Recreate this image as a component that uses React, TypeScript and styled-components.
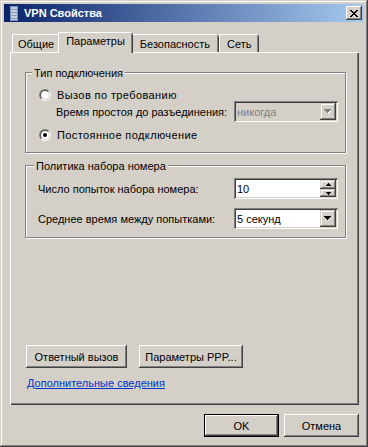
import React from "react";
import styled, { createGlobalStyle } from "styled-components";

const GlobalStyle = createGlobalStyle`
  html, body { margin: 0; padding: 0; background: #d4d0c8; }
  body {
    font-family: "Liberation Sans", Arial, sans-serif;
    font-size: 11px;
    color: #000;
  }
  * { box-sizing: border-box; }
`;

const Window = styled.div`
  width: 368px;
  height: 447px;
  padding: 4px;
  background: #d4d0c8;
  display: flex;
  flex-direction: column;
  box-shadow: inset -1px -1px #404040, inset 1px 1px #d4d0c8,
    inset -2px -2px #808080, inset 2px 2px #fff;
`;

const TitleBar = styled.div`
  height: 18px;
  display: flex;
  align-items: center;
  gap: 6px;
  padding: 0 2px 0 6px;
  background: linear-gradient(to right, #0a246a, #a6caf0);
  color: #fff;
  font-weight: bold;
  font-size: 11px;
`;

const TitleText = styled.span`
  flex: 1;
`;

const CloseButton = styled.span`
  width: 16px;
  height: 14px;
  display: flex;
  align-items: center;
  justify-content: center;
  background: #d4d0c8;
  box-shadow: inset -1px -1px #404040, inset 1px 1px #fff,
    inset -2px -2px #808080, inset 2px 2px #d4d0c8;
`;

const Body = styled.div`
  flex: 1;
  display: flex;
  flex-direction: column;
  padding: 10px 5px 6px 6px;
`;

const TabStrip = styled.div`
  display: flex;
  align-items: flex-end;
  height: 20px;
  padding-left: 2px;
  position: relative;
  z-index: 1;
`;

const Tab = styled.div<{ $active?: boolean; $pad?: number }>`
  height: ${(p) => (p.$active ? "21px" : "18px")};
  margin: ${(p) => (p.$active ? "0 -2px -1px" : "0")};
  padding: ${(p) => (p.$active ? "3px" : "4px")} ${(p) => p.$pad ?? 7}px 0;
  background: #d4d0c8;
  border-radius: 2px 2px 0 0;
  box-shadow: inset 1px 0 #fff, inset 0 1px #fff, inset -1px 0 #404040,
    inset -2px 0 #808080;
  position: relative;
  z-index: ${(p) => (p.$active ? 2 : 0)};
  white-space: nowrap;
`;

const Panel = styled.div`
  flex: 1;
  display: flex;
  flex-direction: column;
  padding: 19px 0 15px 0;
  border-top: 1px solid #fff;
  border-left: 1px solid #fff;
  box-shadow: inset -1px -1px #404040, inset -2px -2px #808080;
`;

const Group = styled.div<{ $top?: number }>`
  margin: ${(p) => p.$top ?? 0}px 13px 0 14px;
  border: 1px solid #808080;
  box-shadow: inset 1px 1px #fff, 1px 1px #fff;
  display: flex;
  flex-direction: column;
`;

const Legend = styled.span<{ $left?: number }>`
  align-self: flex-start;
  margin: -6px 0 0 ${(p) => p.$left ?? 6}px;
  padding: 0 2px;
  line-height: 13px;
  background: #d4d0c8;
`;

const GroupBody = styled.div<{ $pad: string }>`
  display: flex;
  flex-direction: column;
  padding: ${(p) => p.$pad};
`;

const RadioRow = styled.label<{ $top?: number }>`
  display: flex;
  align-items: center;
  gap: 6px;
  height: 13px;
  margin-top: ${(p) => p.$top ?? 0}px;
  letter-spacing: 0.4px;
`;

const RadioOuter = styled.span`
  width: 12px;
  height: 12px;
  border-radius: 50%;
  border: 1px solid;
  border-color: #808080 #fff #fff #808080;
  display: flex;
  align-items: center;
  justify-content: center;
`;

const RadioInner = styled.span`
  width: 10px;
  height: 10px;
  border-radius: 50%;
  border: 1px solid;
  border-color: #404040 #d4d0c8 #d4d0c8 #404040;
  background: #fff;
  display: flex;
  align-items: center;
  justify-content: center;
`;

const Dot = styled.span`
  width: 4px;
  height: 4px;
  border-radius: 50%;
  background: #000;
`;

const FieldRow = styled.div<{ $top?: number; $indent?: number }>`
  display: flex;
  align-items: center;
  height: 21px;
  margin-top: ${(p) => p.$top ?? 0}px;
  padding-left: ${(p) => p.$indent ?? 0}px;
`;

const FieldLabel = styled.span`
  flex: 1;
`;

const Field = styled.div<{ $disabled?: boolean }>`
  width: 104px;
  height: 21px;
  padding: 2px;
  display: flex;
  align-items: stretch;
  background: ${(p) => (p.$disabled ? "#d4d0c8" : "#fff")};
  color: ${(p) => (p.$disabled ? "#808080" : "#000")};
  box-shadow: inset 1px 1px #808080, inset -1px -1px #fff,
    inset 2px 2px #404040, inset -2px -2px #d4d0c8;
`;

const FieldText = styled.span`
  flex: 1;
  display: flex;
  align-items: center;
  padding-left: 1px;
`;

const arrowButton = `
  background: #d4d0c8;
  display: flex;
  align-items: center;
  justify-content: center;
  box-shadow: inset -1px -1px #404040, inset 1px 1px #d4d0c8,
    inset -2px -2px #808080, inset 2px 2px #fff;
`;

const DropButton = styled.span`
  width: 16px;
  ${arrowButton}
`;

const SpinStack = styled.span`
  width: 16px;
  display: flex;
  flex-direction: column;
`;

const SpinButton = styled.span<{ $h: number }>`
  height: ${(p) => p.$h}px;
  ${arrowButton}
`;

const ButtonRow = styled.div`
  display: flex;
  gap: 12px;
  margin: auto 0 0 15px;
`;

const Button = styled.button<{ $w: number; $default?: boolean }>`
  width: ${(p) => p.$w}px;
  height: 23px;
  padding: 0;
  font: inherit;
  color: #000;
  background: #d4d0c8;
  border: ${(p) => (p.$default ? "1px solid #000" : "none")};
  box-shadow: inset -1px -1px #404040, inset 1px 1px #fff,
    inset -2px -2px #808080, inset 2px 2px #d4d0c8;
`;

const Link = styled.a`
  align-self: flex-start;
  margin: 9px 0 0 16px;
  line-height: 13px;
  color: #0033cc;
  text-decoration: underline;
`;

const Footer = styled.div`
  display: flex;
  justify-content: flex-end;
  gap: 5px;
  margin-top: 9px;
`;

const DownArrow = ({ color = "#000", shadow }: { color?: string; shadow?: boolean }) => (
  <svg width="8" height="5" viewBox="0 0 8 5" shapeRendering="crispEdges">
    {shadow && <path d="M2 2h5v1H2zM3 3h3v1H3zM4 4h1v1H4z" fill="#fff" />}
    <path d="M0 0h7v1H0zM1 1h5v1H1zM2 2h3v1H2zM3 3h1v1H3z" fill={color} />
  </svg>
);

const SmallArrow = ({ up }: { up?: boolean }) => (
  <svg width="5" height="3" viewBox="0 0 5 3" shapeRendering="crispEdges">
    {up ? (
      <path d="M2 0h1v1H2zM1 1h3v1H1zM0 2h5v1H0z" fill="#000" />
    ) : (
      <path d="M0 0h5v1H0zM1 1h3v1H1zM2 2h1v1H2z" fill="#000" />
    )}
  </svg>
);

const ServerIcon = () => (
  <svg width="8" height="15" viewBox="0 0 8 15" shapeRendering="crispEdges">
    <rect x="0" y="0" width="8" height="15" fill="#7d8fb3" />
    <rect x="1" y="1" width="6" height="13" fill="#c3cde0" />
    <path d="M1 3h6v1H1zM1 6h6v1H1zM1 9h6v1H1zM1 12h6v1H1z" fill="#8a9bbd" />
  </svg>
);

const CloseGlyph = () => (
  <svg width="8" height="7" viewBox="0 0 8 7" shapeRendering="crispEdges">
    <path
      d="M0 0h2v1H0zM6 0h2v1H6zM1 1h2v1H1zM5 1h2v1H5zM2 2h4v1H2zM3 3h2v1H3zM2 4h4v1H2zM1 5h2v1H1zM5 5h2v1H5zM0 6h2v1H0zM6 6h2v1H6z"
      fill="#000"
    />
  </svg>
);

const Radio = ({ checked }: { checked?: boolean }) => (
  <RadioOuter>
    <RadioInner>{checked && <Dot />}</RadioInner>
  </RadioOuter>
);

export default function App() {
  return (
    <>
      <GlobalStyle />
      <Window>
        <TitleBar>
          <ServerIcon />
          <TitleText>VPN Свойства</TitleText>
          <CloseButton>
            <CloseGlyph />
          </CloseButton>
        </TitleBar>

        <Body>
          <TabStrip>
            <Tab $pad={6}>Общие</Tab>
            <Tab $active $pad={8}>Параметры</Tab>
            <Tab $pad={9}>Безопасность</Tab>
            <Tab $pad={8}>Сеть</Tab>
          </TabStrip>

          <Panel>
            <Group>
              <Legend>Тип подключения</Legend>
              <GroupBody $pad="0 7px 11px 13px">
                <RadioRow $top={8}>
                  <Radio />
                  Вызов по требованию
                </RadioRow>
                <FieldRow $indent={17}>
                  <FieldLabel>Время простоя до разъединения:</FieldLabel>
                  <Field $disabled>
                    <FieldText>никогда</FieldText>
                    <DropButton>
                      <DownArrow color="#808080" shadow />
                    </DropButton>
                  </Field>
                </FieldRow>
                <RadioRow $top={6}>
                  <Radio checked />
                  Постоянное подключение
                </RadioRow>
              </GroupBody>
            </Group>

            <Group $top={12}>
              <Legend $left={8}>Политика набора номера</Legend>
              <GroupBody $pad="0 7px 8px 12px">
                <FieldRow $top={5}>
                  <FieldLabel>Число попыток набора номера:</FieldLabel>
                  <Field>
                    <FieldText>10</FieldText>
                    <SpinStack>
                      <SpinButton $h={9}>
                        <SmallArrow up />
                      </SpinButton>
                      <SpinButton $h={8}>
                        <SmallArrow />
                      </SpinButton>
                    </SpinStack>
                  </Field>
                </FieldRow>
                <FieldRow $top={9}>
                  <FieldLabel>Среднее время между попытками:</FieldLabel>
                  <Field>
                    <FieldText>5 секунд</FieldText>
                    <DropButton>
                      <DownArrow />
                    </DropButton>
                  </Field>
                </FieldRow>
              </GroupBody>
            </Group>

            <ButtonRow>
              <Button $w={101}>Ответный вызов</Button>
              <Button $w={104}>Параметры PPP...</Button>
            </ButtonRow>
            <Link href="#">Дополнительные сведения</Link>
          </Panel>

          <Footer>
            <Button $w={75} $default>
              OK
            </Button>
            <Button $w={75}>Отмена</Button>
          </Footer>
        </Body>
      </Window>
    </>
  );
}
